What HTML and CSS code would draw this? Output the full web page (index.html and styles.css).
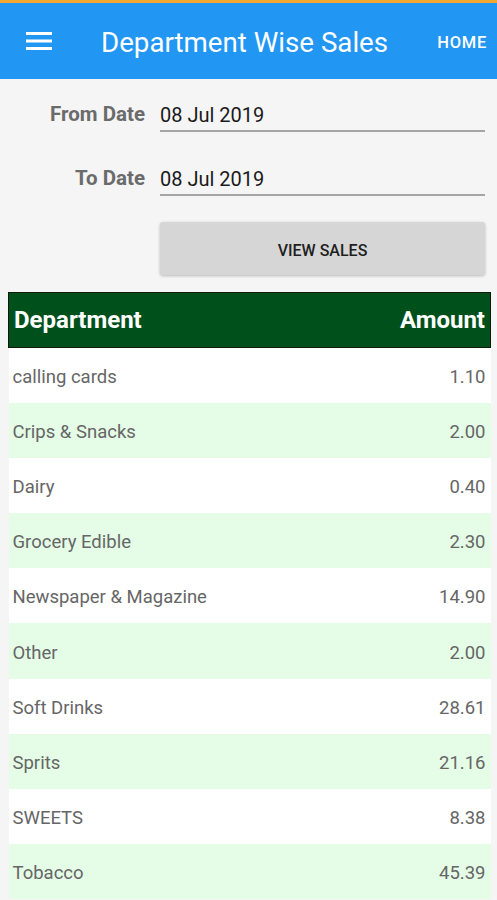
FILE: index.html
```html
<!DOCTYPE html>
<html lang="en">

<head>
    <meta charset="UTF-8">
    <meta name="viewport" content="width=device-width, initial-scale=1.0">
    <link rel="stylesheet" href="styles.css">
    <title>Department Wise Sales</title>
</head>

<body>
    <header class="appbar">
        <button class="menu-btn" aria-label="menu">
            <svg width="26" height="20" viewBox="0 0 26 20">
                <rect x="0" y="1" width="26" height="3" fill="#fff" />
                <rect x="0" y="8.5" width="26" height="3" fill="#fff" />
                <rect x="0" y="16" width="26" height="3" fill="#fff" />
            </svg>
        </button>
        <h1>Department Wise Sales</h1>
        <a class="home" href="#">HOME</a>
    </header>

    <div class="filters">
        <div class="field">
            <label>From Date</label>
            <div class="date-input">08 Jul 2019</div>
        </div>
        <div class="field">
            <label>To Date</label>
            <div class="date-input">08 Jul 2019</div>
        </div>
        <div class="field actions">
            <span></span>
            <button class="btn-view">VIEW SALES</button>
        </div>
    </div>

    <table class="sales">
        <thead>
            <tr>
                <th>Department</th>
                <th class="amt">Amount</th>
            </tr>
        </thead>
        <tbody>
            <tr><td>calling cards</td><td class="amt">1.10</td></tr>
            <tr><td>Crips &amp; Snacks</td><td class="amt">2.00</td></tr>
            <tr><td>Dairy</td><td class="amt">0.40</td></tr>
            <tr><td>Grocery Edible</td><td class="amt">2.30</td></tr>
            <tr><td>Newspaper &amp; Magazine</td><td class="amt">14.90</td></tr>
            <tr><td>Other</td><td class="amt">2.00</td></tr>
            <tr><td>Soft Drinks</td><td class="amt">28.61</td></tr>
            <tr><td>Sprits</td><td class="amt">21.16</td></tr>
            <tr><td>SWEETS</td><td class="amt">8.38</td></tr>
            <tr><td>Tobacco</td><td class="amt">45.39</td></tr>
        </tbody>
    </table>
</body>

</html>
```

FILE: styles.css
```css
* {
    margin: 0;
    padding: 0;
    box-sizing: border-box;
}

body {
    background-color: #f5f5f5;
    font-family: Roboto, "Noto Sans", sans-serif;
    overflow: hidden;
}

.appbar {
    height: 79px;
    border-top: 3px solid #f0a830;
    background-color: #2196f3;
    display: flex;
    align-items: center;
    color: white;
    padding: 0 10px 0 26px;

    .menu-btn {
        background: none;
        border: none;
        display: flex;
        margin-top: -1px;
    }

    h1 {
        font-weight: 400;
        font-size: 27.7px;
        margin-left: 49px;
        margin-top: 3px;
        flex: 1;
    }

    .home {
        color: white;
        text-decoration: none;
        font-weight: 500;
        font-size: 16.5px;
        letter-spacing: 0.7px;
        margin-top: 2px;
    }
}

.filters {
    padding: 24px 12px 0 0;
    display: flex;
    flex-direction: column;

    .field {
        display: grid;
        grid-template-columns: 145px 1fr;
        column-gap: 15px;
        align-items: start;
        height: 64px;
    }

    .actions {
        height: 53px;
        margin-top: -9px;
    }

    label {
        text-align: right;
        font-weight: 700;
        font-size: 20.5px;
        color: #6b6b6b;
        margin-top: -1px;
    }

    .date-input {
        font-size: 20px;
        color: #1a1a1a;
        border-bottom: 2px solid #a5a5a5;
        padding: 0 0 3px 0;
    }

    .btn-view {
        height: 53px;
        border: none;
        border-radius: 3px;
        background-color: #d6d6d6;
        box-shadow: 0 1px 3px rgba(0, 0, 0, 0.25);
        font-family: Roboto, sans-serif;
        font-weight: 500;
        font-size: 16px;
        color: #1f1f1f;
        padding-top: 3px;
    }
}

.sales {
    margin: 17px 6px 0 8px;
    width: calc(100% - 14px);
    border-collapse: collapse;

    thead tr {
        border: 1px solid #0d1a0d;
    }

    th {
        height: 55px;
        background-color: #00501c;
        color: white;
        font-size: 24px;
        font-weight: 700;
        text-align: left;
        padding: 0 5px;
    }

    td {
        height: 55.2px;
        font-size: 18.5px;
        color: #666;
        padding: 3px 5px 0 4px;
    }

    tbody tr:nth-child(odd) {
        background-color: #fff;
    }

    tbody tr:nth-child(even) {
        background-color: #e5fde6;
    }

    .amt {
        text-align: right;
    }
}
```
